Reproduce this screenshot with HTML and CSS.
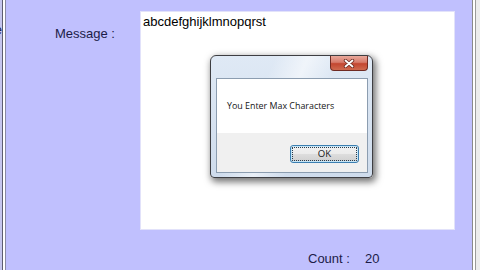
FILE: index.html
```html
<!DOCTYPE html>
<html>
<head>
<meta charset="utf-8">
<link rel="stylesheet" href="styles.css">
</head>
<body>
<div class="window">
  <div class="edge-left">
    <div class="clip"><span class="clip-text">e</span></div>
    <div class="rule"></div>
  </div>
  <main class="panel">
    <div class="form-row">
      <div class="label msg-label">Message :</div>
      <div class="textbox">abcdefghijklmnopqrst</div>
    </div>
    <div class="count-row">
      <span class="label">Count :</span>
      <span class="label count">20</span>
    </div>
    <div class="dialog">
      <div class="titlebar">
        <div class="close">
          <svg width="12" height="9" viewBox="0 0 12 9">
            <path d="M2.5 1.5 L9.5 7.5 M9.5 1.5 L2.5 7.5" stroke="#6b2a20" stroke-width="3.4" stroke-linecap="round" fill="none"/>
            <path d="M2.5 1.5 L9.5 7.5 M9.5 1.5 L2.5 7.5" stroke="#ffffff" stroke-width="1.8" stroke-linecap="round" fill="none"/>
          </svg>
        </div>
      </div>
      <div class="client">
        <div class="message">You Enter Max Characters</div>
        <div class="footer">
          <div class="ok">OK</div>
        </div>
      </div>
    </div>
  </main>
  <div class="edge-right"></div>
</div>
</body>
</html>
```
FILE: styles.css
```css
html, body {
  margin: 0;
  padding: 0;
}
body {
  width: 480px;
  height: 270px;
  overflow: hidden;
  background: #c0c0fe;
}
.window {
  display: flex;
  width: 480px;
  height: 270px;
}
.edge-left {
  display: flex;
  width: 7px;
  flex: none;
}
.clip {
  width: 2px;
  overflow: hidden;
  display: flex;
  justify-content: flex-end;
  background: #c6c6ee;
}
.clip-text {
  font-family: "Liberation Sans", Arial, sans-serif;
  font-size: 13px;
  line-height: 15px;
  color: #202050;
  padding-top: 22px;
}
.rule {
  width: 2px;
  background: #ffffff;
  border-left: 1px solid #5e5e70;
  border-right: 1px solid #8a8aa4;
  margin-right: 1px;
}
.panel {
  position: relative;
  flex: 1;
  padding-top: 11px;
  box-sizing: border-box;
  background: #c0c0fe;
}
.label {
  font-family: "Liberation Sans", Arial, sans-serif;
  font-size: 13px;
  line-height: 15px;
  color: #1c1c48;
}
.form-row {
  display: flex;
}
.msg-label {
  width: 133px;
  box-sizing: border-box;
  padding-left: 48px;
  padding-top: 15px;
}
.textbox {
  width: 315px;
  height: 219px;
  box-sizing: border-box;
  background: #ffffff;
  border: 1px solid #e2e2fa;
  padding: 2px 2px;
  font-family: "Liberation Sans", Arial, sans-serif;
  font-size: 13px;
  line-height: 15px;
  color: #000000;
}
.count-row {
  display: flex;
  gap: 15px;
  margin-top: 21px;
  padding-left: 301px;
}
.dialog {
  position: absolute;
  left: 203px;
  top: 55px;
  width: 163px;
  height: 123px;
  box-sizing: border-box;
  border: 1px solid #3e3e42;
  border-radius: 6px 6px 4px 4px;
  padding: 0 4px 4px 5px;
  background:
    linear-gradient(115deg, rgba(255,255,255,0) 30%, rgba(255,255,255,0.55) 45%, rgba(255,255,255,0) 60%),
    linear-gradient(to bottom, #dfe9f5, #cfdcec);
  box-shadow: 2px 3px 7px 1px rgba(0,0,0,0.55);
  display: flex;
  flex-direction: column;
}
.titlebar {
  height: 22px;
  display: flex;
  justify-content: flex-end;
  align-items: flex-start;
}
.close {
  width: 38px;
  height: 15px;
  box-sizing: border-box;
  border: 1px solid #6e2a22;
  border-top: none;
  border-radius: 0 0 4px 4px;
  background: linear-gradient(to bottom, #e9a99c 0%, #d77b6b 45%, #c34630 55%, #cf6a4f 100%);
  display: flex;
  align-items: center;
  justify-content: center;
}
.close svg {
  display: block;
}
.client {
  height: 95px;
  box-sizing: border-box;
  border: 1px solid #8c9db0;
  background: #ffffff;
  display: flex;
  flex-direction: column;
}
.message {
  height: 54px;
  box-sizing: border-box;
  padding: 21px 0 0 10px;
  font-family: "Open Sans", "Liberation Sans", sans-serif;
  font-size: 8.9px;
  line-height: 12px;
  color: #151515;
}
.footer {
  flex: 1;
  background: #f0f0f0;
  display: flex;
  justify-content: flex-end;
  align-items: flex-start;
  padding: 12px 8px 0 0;
}
.ok {
  width: 69px;
  height: 18px;
  box-sizing: border-box;
  border: 1px solid #3c7fb1;
  border-radius: 3px;
  background: linear-gradient(to bottom, #f2f2f2 0%, #ebebeb 50%, #dddddd 51%, #cfcfcf 100%);
  box-shadow: inset 0 0 0 1px #c4e5f6;
  outline: 1px dotted #2a3a4a;
  outline-offset: -3px;
  font-family: "Open Sans", "Liberation Sans", sans-serif;
  font-size: 9.6px;
  line-height: 16px;
  text-align: center;
  color: #151515;
}
.edge-right {
  width: 8px;
  flex: none;
  display: flex;
  background: #ececec;
  box-sizing: border-box;
  border-left: 1px solid #8a8a8a;
}
.edge-right::before {
  content: "";
  width: 2px;
  background: #ffffff;
  border-right: 1px solid #9a9a9a;
}
```
